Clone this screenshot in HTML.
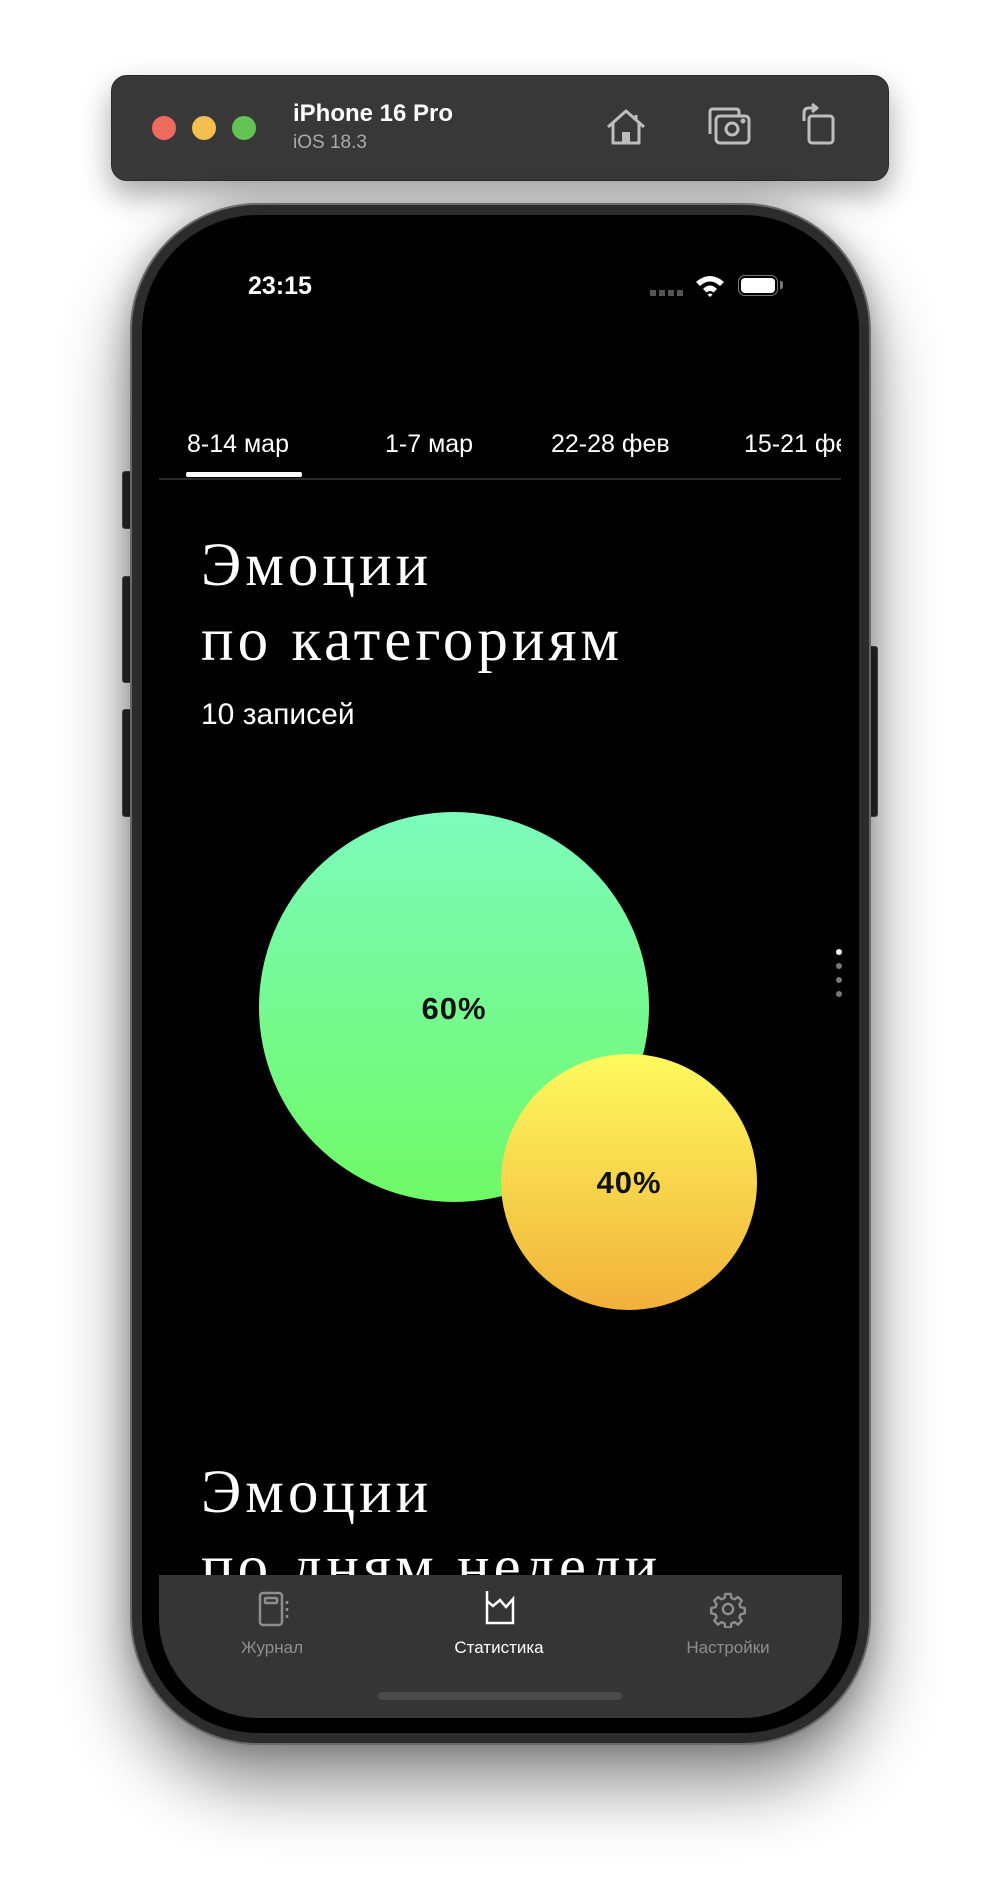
<!DOCTYPE html>
<html><head><meta charset="utf-8">
<style>
*{margin:0;padding:0;box-sizing:border-box}
html,body{width:1002px;height:1898px;background:#fff;overflow:hidden;font-family:"Liberation Sans","Noto Sans CJK SC",sans-serif}
.abs{position:absolute}
#tb{left:111px;top:75px;width:778px;height:106px;background:#383838;border-radius:16px;box-shadow:0 14px 30px rgba(0,0,0,.35);border:1px solid #2a2a2a}
.dot{width:24px;height:24px;border-radius:50%;top:40px}
#phone{left:130px;top:203px;width:741px;height:1542px;border-radius:128px;background:#2c2c2c;border:2px solid #6a6a6a;box-shadow:0 40px 70px rgba(0,0,0,.45),0 0 30px rgba(0,0,0,.25)}
#scr{left:142px;top:215px;width:717px;height:1518px;border-radius:116px;background:#000;overflow:hidden}
.btn{background:#2a2a2a;border:1px solid #555;border-radius:3px}
.serif{font-family:"Liberation Serif",serif;color:#fff;font-size:61px;letter-spacing:4px;line-height:75px}
.tab{color:#fff;font-size:25px;top:427px;white-space:nowrap}
</style></head><body>
<div id="tb" class="abs">
  <div class="abs dot" style="left:40px;background:#ee6a5f"></div>
  <div class="abs dot" style="left:80px;background:#f5bf4f"></div>
  <div class="abs dot" style="left:120px;background:#61c454"></div>
  <div class="abs" style="left:181px;top:24px;color:#fff;font-weight:bold;font-size:24px">iPhone 16 Pro</div>
  <div class="abs" style="left:181px;top:56px;color:#aaa;font-size:19px">iOS 18.3</div>
  <svg class="abs" style="left:493px;top:31px" width="44" height="40" viewBox="0 0 44 40" fill="none" stroke="#bdbdbd" stroke-width="3" stroke-linejoin="round"><path d="M3 20 L21 4 L39 20 M8 16 V36 H34 V16 M31 8 V13"/><rect x="17" y="25" width="8" height="11" fill="#bdbdbd" stroke="none"/></svg>
  <svg class="abs" style="left:594px;top:30px" width="46" height="40" viewBox="0 0 46 40" fill="none" stroke="#bdbdbd" stroke-width="3" stroke-linejoin="round"><path d="M4 28 V6 Q4 3 7 3 H30 Q33 3 33 6 V9"/><rect x="10" y="10" width="33" height="27" rx="4"/><circle cx="26" cy="23" r="6"/><circle cx="37" cy="15" r="1" fill="#bdbdbd"/></svg>
  <svg class="abs" style="left:688px;top:27px" width="38" height="44" viewBox="0 0 38 44" fill="none" stroke="#bdbdbd" stroke-width="3" stroke-linejoin="round"><rect x="9" y="13" width="24" height="27" rx="3"/><path d="M4 18 V10 Q4 5 9 5 H14"/><path d="M12 1 L17 5 L12 9" fill="#bdbdbd"/></svg>
</div>
<div class="abs btn" style="left:122px;top:471px;width:10px;height:58px"></div>
<div class="abs btn" style="left:122px;top:576px;width:10px;height:107px"></div>
<div class="abs btn" style="left:122px;top:709px;width:10px;height:108px"></div>
<div class="abs btn" style="left:868px;top:646px;width:10px;height:171px"></div>
<div id="phone" class="abs"></div>
<div id="scr" class="abs"></div>
<!-- status bar -->
<div class="abs" style="left:248px;top:272px;color:#fff;font-weight:bold;font-size:25px">23:15</div>
<div class="abs" style="left:650px;top:290px;width:34px;height:6px;background:repeating-linear-gradient(90deg,#555 0 6px,transparent 6px 9px)"></div>
<svg class="abs" style="left:694px;top:273px" width="32" height="24" viewBox="0 0 32 24"><path d="M2 9 Q16 -3 30 9 L26 13 Q16 4 6 13Z M9 16 Q16 9 23 16 L19.5 19.5 Q16 16.5 12.5 19.5Z M16 24 L13.5 21.5 Q16 19.5 18.5 21.5Z" fill="#fff"/></svg>
<div class="abs" style="left:738px;top:275px;width:40px;height:21px;border:1.5px solid #777;border-radius:7px;padding:2px"><div style="width:100%;height:100%;background:#fff;border-radius:4px"></div></div>
<div class="abs" style="left:780px;top:281px;width:3px;height:8px;background:#777;border-radius:0 2px 2px 0"></div>
<!-- tabs -->
<div class="abs" style="left:159px;top:400px;width:682px;height:80px;overflow:hidden">
  <div class="abs tab" style="left:28px;top:30px">8-14 мар</div>
  <div class="abs tab" style="left:226px;top:30px">1-7 мар</div>
  <div class="abs tab" style="left:392px;top:30px">22-28 фев</div>
  <div class="abs tab" style="left:585px;top:30px">15-21 фев</div>
  <div class="abs" style="left:27px;top:72px;width:116px;height:5px;background:#fff;border-radius:2px"></div>
  <div class="abs" style="left:0;top:78px;width:682px;height:2px;background:#2a2a2a"></div>
</div>
<!-- title -->
<div class="abs serif" style="left:201px;top:528px">Эмоции<br>по категориям</div>
<div class="abs" style="left:201px;top:698px;color:#fff;font-size:30px">10 записей</div>
<!-- circles -->
<div class="abs" style="left:259px;top:812px;width:390px;height:390px;border-radius:50%;background:linear-gradient(#7cfbbc,#70f966)"></div>
<div class="abs" style="left:259px;top:991px;width:390px;text-align:center;font-size:31px;font-weight:bold;color:#111;letter-spacing:1px">60%</div>
<div class="abs" style="left:501px;top:1054px;width:256px;height:256px;border-radius:50%;background:linear-gradient(#fefa5e,#f1b13b)"></div>
<div class="abs" style="left:501px;top:1165px;width:256px;text-align:center;font-size:31px;font-weight:bold;color:#111;letter-spacing:1px">40%</div>
<div class="abs" style="left:836px;top:949px;width:6px;height:6px;border-radius:50%;background:#fff"></div>
<div class="abs" style="left:836px;top:963px;width:6px;height:6px;border-radius:50%;background:#777"></div>
<div class="abs" style="left:836px;top:977px;width:6px;height:6px;border-radius:50%;background:#777"></div>
<div class="abs" style="left:836px;top:991px;width:6px;height:6px;border-radius:50%;background:#777"></div>
<!-- second title -->
<div class="abs serif" style="left:201px;top:1455px">Эмоции<br>по дням недели</div>
<!-- tab bar -->
<div class="abs" style="left:159px;top:1575px;width:683px;height:143px;background:#353535;border-radius:0 0 100px 100px">
  <svg class="abs" style="left:98px;top:16px" width="34" height="36" viewBox="0 0 34 36" fill="none" stroke="#8e8e8e" stroke-width="2.5"><rect x="3" y="2" width="22" height="32" rx="3"/><rect x="8" y="7" width="12" height="5" rx="1"/><path d="M30 10v3M30 17v3M30 24v3"/></svg>
  <svg class="abs" style="left:324px;top:14px" width="34" height="38" viewBox="0 0 34 38" fill="none" stroke="#fff" stroke-width="2.5"><path d="M4 2 V34 H30 V10 L23 18 L17 11 L10 17 L4 12"/></svg>
  <svg class="abs" style="left:550px;top:15px" width="38" height="38" viewBox="0 0 24 24" fill="none" stroke="#8e8e8e" stroke-width="1.5" stroke-linejoin="round"><path d="M10.3 2.5h3.4l.5 2.6 1.9.8 2.2-1.5 2.4 2.4-1.5 2.2.8 1.9 2.6.5v3.4l-2.6.5-.8 1.9 1.5 2.2-2.4 2.4-2.2-1.5-1.9.8-.5 2.6h-3.4l-.5-2.6-1.9-.8-2.2 1.5-2.4-2.4 1.5-2.2-.8-1.9-2.6-.5v-3.4l2.6-.5.8-1.9-1.5-2.2 2.4-2.4 2.2 1.5 1.9-.8z"/><circle cx="12" cy="12" r="3.2"/></svg>
  <div class="abs" style="left:33px;top:63px;width:160px;text-align:center;color:#8e8e8e;font-size:17px">Журнал</div>
  <div class="abs" style="left:260px;top:63px;width:160px;text-align:center;color:#fff;font-size:17px">Статистика</div>
  <div class="abs" style="left:489px;top:63px;width:160px;text-align:center;color:#8e8e8e;font-size:17px">Настройки</div>
  <div class="abs" style="left:219px;top:117px;width:244px;height:8px;border-radius:4px;background:#4a4a4a"></div>
</div>
</body></html>
